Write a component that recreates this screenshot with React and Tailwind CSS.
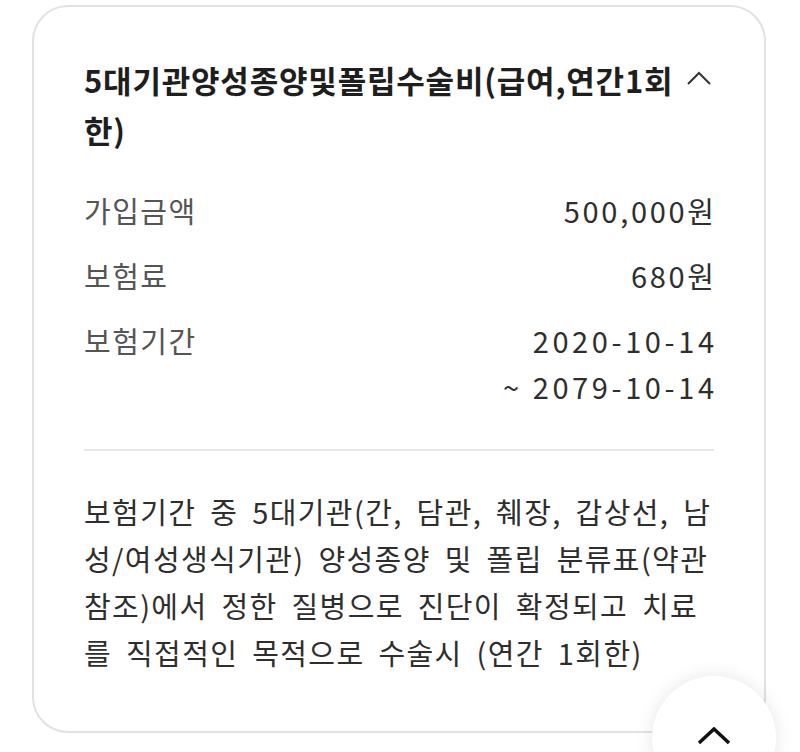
import React from 'react';

const font = { fontFamily: '"Noto Sans CJK KR", "Noto Sans", sans-serif' };

const rows = [
  { label: '가입금액', value: ['500,000원'], cls: 'tracking-[2.7px] -mr-[2.7px]' },
  { label: '보험료', value: ['680원'], cls: 'tracking-[2.7px] -mr-[2.7px]' },
  { label: '보험기간', value: ['2020-10-14', '~ 2079-10-14'], cls: 'tracking-[3.6px] -mr-[3.6px]' },
];

const desc = [
  '보험기간 중 5대기관(간, 담관, 췌장, 갑상선, 남',
  '성/여성생식기관) 양성종양 및 폴립 분류표(약관',
  '참조)에서 정한 질병으로 진단이 확정되고 치료',
  '를 직접적인 목적으로 수술시 (연간 1회한)',
];

export default function App() {
  return (
    <div className="relative h-[752px] overflow-hidden bg-white" style={font}>
      <div className="ml-[32px] mt-[5px] w-[734px] h-[728px] rounded-[36px] border-2 border-[#e2e2e2] bg-white px-[50px] pt-[48px]">
        {/* Title */}
        <div className="flex items-start justify-between">
          <p className="text-[31px] leading-[50px] font-bold text-[#1e1e1e] tracking-[0.8px] whitespace-nowrap">
            5대기관양성종양및폴립수술비(급여,연간1회
            <br />
            한)
          </p>
          <svg width="24" height="14" viewBox="0 0 24 14" className="mt-[16px] mr-[3px]" fill="none">
            <polyline points="1,13 12,2 23,13" stroke="#333" strokeWidth="2" />
          </svg>
        </div>

        {/* Rows */}
        <div className="mt-[32px] flex flex-col gap-[19px]">
          {rows.map((r) => (
            <div key={r.label} className="flex justify-between text-[29px] leading-[46px]">
              <span className="text-[#555] tracking-[1.5px]">{r.label}</span>
              <div className={`text-right text-[#2e2e2e] ${r.cls}`}>
                {r.value.map((v) => (
                  <div key={v}>{v}</div>
                ))}
              </div>
            </div>
          ))}
        </div>

        <div className="mt-[40px] h-[2px] bg-[#e6e6e6]" />

        {/* Description */}
        <div className="mt-[37px] text-[29px] leading-[47px] text-[#2e2e2e] tracking-[1.4px] [word-spacing:6px]">
          {desc.map((l) => (
            <div key={l} className="whitespace-nowrap">{l}</div>
          ))}
        </div>
      </div>

      {/* Floating scroll-top button */}
      <button
        type="button"
        className="absolute left-[652px] top-[676px] w-[124px] h-[124px] rounded-full bg-white shadow-[0_0_18px_rgba(0,0,0,0.1)] flex items-center justify-center"
      >
        <svg width="34" height="18" viewBox="0 0 34 18" fill="none" className="-mt-[4px]">
          <polyline points="2,16 17,2 32,16" stroke="#111" strokeWidth="3.5" />
        </svg>
      </button>
    </div>
  );
}
